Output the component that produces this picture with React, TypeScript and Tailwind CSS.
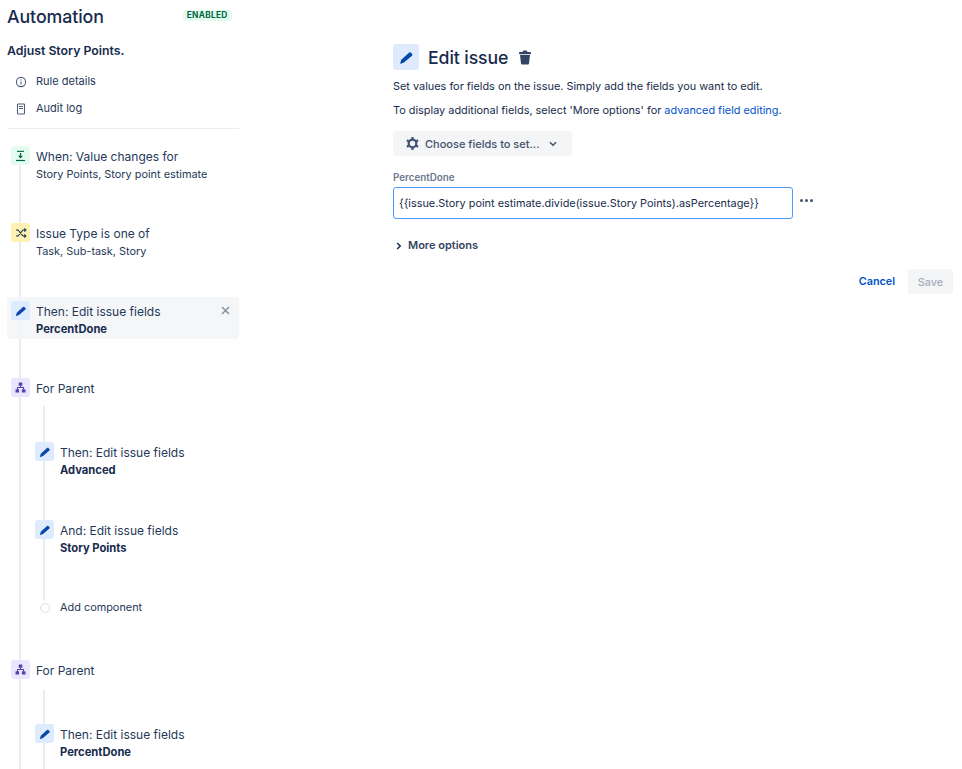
import React from "react";

const Pencil = ({ s = 12 }: { s?: number }) => (
  <svg width={s} height={s} viewBox="0 0 12 12" fill="#0747a6">
    <path d="M8 2.1a1 1 0 0 1 1.4-.1l1.1 1.2a1 1 0 0 1-.1 1.4L4 10 1.3 10.9a.2.2 0 0 1-.3-.3l.8-2.9L8 2.1Z" />
  </svg>
);

const Branch = () => (
  <svg width="11" height="11" viewBox="0 0 11 11" fill="#5243aa">
    <rect x="3.7" y="0.5" width="3.6" height="3.2" rx="0.5" />
    <rect x="0.5" y="7.3" width="3.6" height="3.2" rx="0.5" />
    <rect x="6.9" y="7.3" width="3.6" height="3.2" rx="0.5" />
    <path d="M5 3.5h1v1.6h3v2.4H8V6.1H3v1.4H2V5.1h3V3.5Z" />
  </svg>
);

const Shuffle = () => (
  <svg width="12" height="12" viewBox="0 0 12 12" fill="none" stroke="#172b4d" strokeWidth="1.1">
    <path d="M1 3h2l5 6h2.5M1 9h2l5-6h2.5" />
    <path d="M9.3 1.5 10.8 3 9.3 4.5M9.3 7.5 10.8 9 9.3 10.5" />
  </svg>
);

const ValueIcon = () => (
  <svg width="11" height="12" viewBox="0 0 11 12" fill="#006644">
    <rect x="2" y="0.8" width="7" height="1.1" />
    <rect x="1" y="9.9" width="9" height="1.2" />
    <rect x="4.9" y="3" width="1.2" height="3.4" />
    <path d="M3 5.7h5L5.5 8.6 3 5.7Z" />
  </svg>
);

const IconBox = ({ bg, children }: { bg: string; children: React.ReactNode }) => (
  <div className={`relative z-10 flex h-[19px] w-[19px] shrink-0 items-center justify-center rounded-[3px] ${bg}`}>
    {children}
  </div>
);

const Row = ({
  icon,
  title,
  sub,
  bold,
  className = "",
}: {
  icon: React.ReactNode;
  title: string;
  sub?: string;
  bold?: boolean;
  className?: string;
}) => (
  <div className={`flex gap-[6px] ${className}`}>
    {icon}
    <div className="min-w-0 pt-[1px]">
      <div className="text-[12px] leading-[19px] text-[#253858]">{title}</div>
      {sub && (
        <div className={`mt-[-1px] leading-[18px] ${bold ? "text-[11.2px] font-bold text-[#172b4d]" : "text-[10.9px] text-[#253858]"}`}>
          {sub}
        </div>
      )}
    </div>
  </div>
);

export default function App() {
  return (
    <div
      className="flex h-[769px] w-[962px] overflow-hidden bg-white text-[#172b4d]"
      style={{ fontFamily: "Inter, sans-serif" }}
    >
      <aside className="ml-[7px] w-[232px] shrink-0">
        <div className="flex h-[33px] items-center">
          <h1 className="text-[17.8px] font-medium leading-[30px] tracking-[-0.1px] text-[#172b4d]">Automation</h1>
          <span className="ml-[79px] mb-[3px] rounded-[3px] bg-[#e3fcef] px-[4px] text-[8.3px] font-bold leading-[11px] tracking-[0.3px] text-[#006644]">
            ENABLED
          </span>
        </div>
        <h2 className="mt-[9px] text-[12.3px] font-semibold leading-[18px] text-[#172b4d]">Adjust Story Points.</h2>
        <div className="mt-[8px] flex h-[27px] items-center pl-[8px] text-[11px] text-[#253858]">
          <svg width="12" height="12" viewBox="0 0 12 12" fill="none" stroke="#505f79" strokeWidth="1.1">
            <circle cx="6" cy="6" r="4.6" />
            <path d="M6 5.4v3M6 3.4v1" />
          </svg>
          <span className="ml-[9px]">Rule details</span>
        </div>
        <div className="flex h-[27px] items-center pl-[8px] text-[11px] text-[#253858]">
          <svg width="12" height="12" viewBox="0 0 12 12" fill="none" stroke="#505f79" strokeWidth="1.1">
            <rect x="2.5" y="1" width="7" height="10" rx="0.8" />
            <path d="M4 3.5h4M4 5.5h4" />
          </svg>
          <span className="ml-[9px]">Audit log</span>
        </div>
        <div className="mt-[6px] h-px bg-[#ebecf0]" />

        <div className="relative mt-[17px] pl-[4px]">
          <div className="absolute left-[12px] top-[10px] h-[700px] w-[2px] bg-[#ebecf0]" />
          <Row
            icon={<IconBox bg="bg-[#e3fcef]"><ValueIcon /></IconBox>}
            title="When: Value changes for"
            sub="Story Points, Story point estimate"
          />
          <Row
            className="mt-[40px]"
            icon={<IconBox bg="bg-[#fff0b3]"><Shuffle /></IconBox>}
            title="Issue Type is one of"
            sub="Task, Sub-task, Story"
          />
          <div className="relative -ml-[4px] mt-[37px] flex h-[42px] rounded-[3px] bg-[#f4f5f7]/90 pl-[4px] pt-[4px]">
            <Row
              icon={<IconBox bg="bg-[#deebff]"><Pencil /></IconBox>}
              title="Then: Edit issue fields"
              sub="PercentDone"
              bold
            />
            <svg className="absolute right-[9px] top-[9px]" width="9" height="9" viewBox="0 0 9 9" stroke="#8993a4" strokeWidth="1.5">
              <path d="M1 1l7 7M8 1 1 8" />
            </svg>
          </div>
          <Row className="mt-[39px]" icon={<IconBox bg="bg-[#eae6ff]"><Branch /></IconBox>} title="For Parent" />
          <div className="relative pl-[24px] pt-[44px]">
            <div className="absolute left-[32px] top-[8px] h-[195px] w-[2px] bg-[#ebecf0]" />
            <Row icon={<IconBox bg="bg-[#deebff]"><Pencil /></IconBox>} title="Then: Edit issue fields" sub="Advanced" bold />
            <Row className="mt-[41px]" icon={<IconBox bg="bg-[#deebff]"><Pencil /></IconBox>} title="And: Edit issue fields" sub="Story Points" bold />
            <div className="relative z-10 mt-[41px] flex h-[19px] items-center gap-[6px]">
              <div className="flex h-[19px] w-[19px] items-center justify-center">
                <div className="h-[10px] w-[10px] rounded-full border border-[#dfe1e6] bg-white" />
              </div>
              <span className="text-[10.9px] text-[#253858]">Add component</span>
            </div>
          </div>
          <Row className="mt-[43px]" icon={<IconBox bg="bg-[#eae6ff]"><Branch /></IconBox>} title="For Parent" />
          <div className="relative pl-[24px] pt-[44px]">
            <div className="absolute left-[32px] top-[10px] h-[100px] w-[2px] bg-[#ebecf0]" />
            <Row icon={<IconBox bg="bg-[#deebff]"><Pencil /></IconBox>} title="Then: Edit issue fields" sub="PercentDone" bold />
          </div>
        </div>
      </aside>

      <main className="ml-[154px] w-[560px] shrink-0 pt-[44px]">
        <div className="flex h-[26px] items-center">
          <div className="flex h-[26px] w-[26px] items-center justify-center rounded-[3px] bg-[#deebff]">
            <Pencil s={15} />
          </div>
          <h2 className="ml-[9px] pt-[2px] text-[17.7px] font-medium tracking-[-0.1px] text-[#172b4d]">Edit issue</h2>
          <svg className="ml-[10px]" width="14" height="15" viewBox="0 0 14 15" fill="#344563">
            <rect x="1" y="2" width="12" height="2.2" rx="0.6" />
            <rect x="4.8" y="0.5" width="4.4" height="2" rx="0.6" />
            <path d="M2 5h10l-1 8.6a1 1 0 0 1-1 .9H4a1 1 0 0 1-1-.9L2 5Z" />
          </svg>
        </div>
        <p className="mt-[7px] text-[10.9px] leading-[18px] text-[#172b4d]">
          Set values for fields on the issue. Simply add the fields you want to edit.
        </p>
        <p className="mt-[6px] text-[10.9px] leading-[18px] text-[#172b4d]">
          To display additional fields, select 'More options' for <span className="text-[#0052cc]">advanced field editing</span>.
        </p>
        <button className="mt-[12px] flex h-[25px] w-[179px] items-center rounded-[3px] bg-[#f4f5f7] pl-[12px] text-[11px] font-medium text-[#42526e]">
          <svg width="15" height="15" viewBox="0 0 15 15" fill="none" stroke="#42526e" strokeWidth="2.2">
            <circle cx="7.5" cy="7.5" r="3.8" />
            <path d="M7.5 1v2M7.5 12v2M1.9 4.2l1.7 1M11.4 9.8l1.7 1M1.9 10.8l1.7-1M11.4 5.2l1.7-1" />
          </svg>
          <span className="ml-[5px] pt-[1px]">Choose fields to set...</span>
          <svg className="ml-[9px]" width="8" height="6" viewBox="0 0 8 6" fill="none" stroke="#42526e" strokeWidth="1.5">
            <path d="M1 1.3 4 4.2l3-2.9" />
          </svg>
        </button>
        <label className="mt-[16px] block text-[9.8px] font-semibold leading-[12px] text-[#6b778c]">PercentDone</label>
        <div className="mt-[3px] flex items-center">
          <div className="flex h-[32px] w-[400px] items-center rounded-[3px] border border-[#4c9aff] pl-[5px] text-[10.9px] text-[#172b4d]">
            {"{{issue.Story point estimate.divide(issue.Story Points).asPercentage}}"}
          </div>
          <div className="ml-[7px] mb-[6px] flex gap-[2px]">
            <span className="h-[3px] w-[3px] rounded-full bg-[#42526e]" />
            <span className="h-[3px] w-[3px] rounded-full bg-[#42526e]" />
            <span className="h-[3px] w-[3px] rounded-full bg-[#42526e]" />
          </div>
        </div>
        <div className="mt-[17px] flex h-[18px] items-center pt-[1px] text-[11px] font-semibold text-[#344563]">
          <svg className="ml-[3px]" width="6" height="8" viewBox="0 0 6 8" fill="none" stroke="#172b4d" strokeWidth="1.5">
            <path d="M1.2 1 4.2 4l-3 3" />
          </svg>
          <span className="ml-[6px]">More options</span>
        </div>
        <div className="mt-[15px] flex items-center justify-end">
          <button className="pt-[1px] text-[10.8px] font-semibold text-[#0052cc]">Cancel</button>
          <button className="ml-[13px] h-[25px] w-[45px] rounded-[3px] bg-[#f4f5f7] pt-[1px] text-[10.9px] font-medium text-[#a5adba]">Save</button>
        </div>
      </main>
    </div>
  );
}
